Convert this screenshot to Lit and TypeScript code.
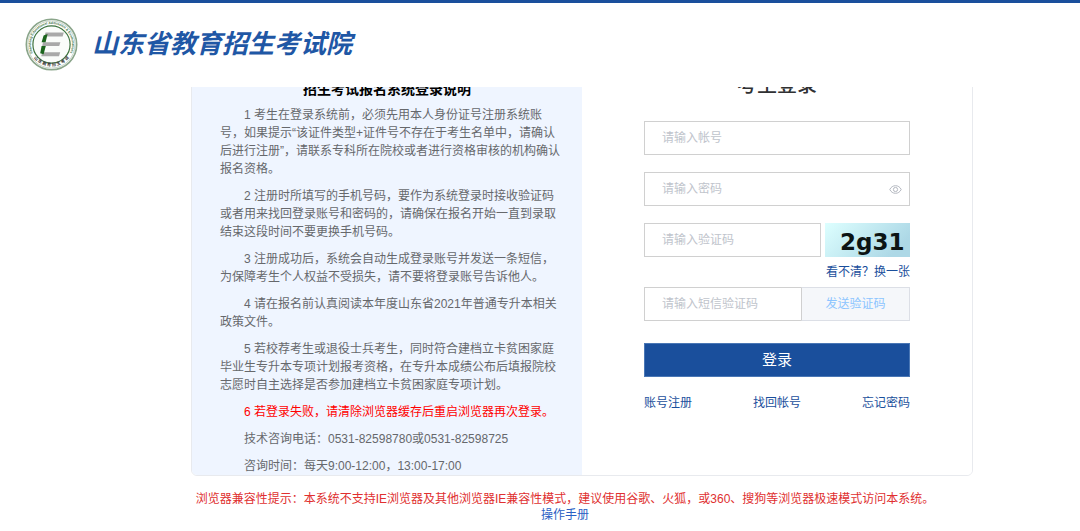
import { LitElement, html, css, svg } from "lit";
import { customElement, state } from "lit/decorators.js";

const NOTES: { text: string; warn?: boolean }[] = [
  { text: "1 考生在登录系统前，必须先用本人身份证号注册系统账号，如果提示“该证件类型+证件号不存在于考生名单中，请确认后进行注册”，请联系专科所在院校或者进行资格审核的机构确认报名资格。" },
  { text: "2 注册时所填写的手机号码，要作为系统登录时接收验证码或者用来找回登录账号和密码的，请确保在报名开始一直到录取结束这段时间不要更换手机号码。" },
  { text: "3 注册成功后，系统会自动生成登录账号并发送一条短信，为保障考生个人权益不受损失，请不要将登录账号告诉他人。" },
  { text: "4 请在报名前认真阅读本年度山东省2021年普通专升本相关政策文件。" },
  { text: "5 若校荐考生或退役士兵考生，同时符合建档立卡贫困家庭毕业生专升本专项计划报考资格，在专升本成绩公布后填报院校志愿时自主选择是否参加建档立卡贫困家庭专项计划。" },
  { text: "6 若登录失败，请清除浏览器缓存后重启浏览器再次登录。", warn: true },
  { text: "技术咨询电话：0531-82598780或0531-82598725" },
  { text: "咨询时间：每天9:00-12:00，13:00-17:00" },
];

@customElement("site-header")
class SiteHeader extends LitElement {
  static styles = css`
    :host {
      display: block;
      background: #fff;
    }
    .bar {
      display: flex;
      align-items: center;
      gap: 14px;
      box-sizing: border-box;
      height: 87px;
      padding: 0 25px 2px;
      border-top: 3px solid #1a4f9c;
    }
    .seal {
      width: 53px;
      height: 53px;
      flex: none;
      overflow: visible;
    }
    .name {
      margin: 0;
      font-size: 26px;
      line-height: 36px;
      font-weight: 700;
      font-style: italic;
      color: #1f57a5;
      white-space: nowrap;
    }
  `;
  render() {
    return html`<header class="bar">
      <svg class="seal" viewBox="0 0 53 53" aria-hidden="true">
        <defs>
          <path id="upper" d="M9.2 37.5 A20.5 20.5 0 1 1 43.8 37.5" />
          <path id="lower" d="M6.5 36.5 A23 23 0 0 0 46.5 36.5" />
        </defs>
        <circle cx="26.5" cy="26.5" r="25.2" fill="#fff" stroke="#8aa58a" stroke-width="1.6" />
        <circle cx="26.5" cy="26.5" r="23.6" fill="none" stroke="#9fb59f" stroke-width=".6" />
        <circle cx="26.5" cy="26.5" r="18.6" fill="#fafcfa" stroke="#3d733f" stroke-width="1.2" />
        <text font-family="Liberation Sans" font-size="3.4" font-weight="700" fill="#3d733f">
          <textPath href="#upper" startOffset="50%" text-anchor="middle">Shandong Educational Admission &amp; Examinations</textPath>
        </text>
        <text font-family="Noto Sans CJK SC" font-size="4.2" font-weight="700" fill="#333">
          <textPath href="#lower" startOffset="50%" text-anchor="middle">山 东 教 育 招 生 考 试</textPath>
        </text>
        <path d="M20.6 14.4h18.2l-1.2 4H19.4z M18 24.2h17.4l-1.2 3.8H17.2z M17.4 34.2h17.8l-1.2 4H16.2z" fill="#a9a9a9" />
        <path d="M18.6 17.4l4-1.4-2 8.2h-4z M16.6 28h4.2l-2.2 8.2-3.4-1z" fill="#1b651d" />
      </svg>
      <h1 class="name">山东省教育招生考试院</h1>
    </header>`;
  }
}

@customElement("login-notes")
class LoginNotes extends LitElement {
  static styles = css`
    :host {
      display: block;
      background: #eff5ff;
    }
    .title {
      margin: 0;
      padding: 22px 0 7px;
      font-size: 14px;
      line-height: 20px;
      font-weight: 700;
      text-align: center;
      color: #000;
    }
    .notes {
      padding: 0 19px 0 28px;
      color: #66686c;
    }
    .note {
      margin: 0 0 9px;
      font-size: 12px;
      line-height: 18px;
      text-indent: 24px;
    }
    .note:last-child {
      margin: 0;
    }
    .warn {
      color: #f00;
    }
  `;
  render() {
    return html`<section>
      <h2 class="title">招生考试报名系统登录说明</h2>
      <div class="notes">
        ${NOTES.map((n) => html`<p class="note ${n.warn ? "warn" : ""}">${n.text}</p>`)}
      </div>
    </section>`;
  }
}

@customElement("login-form")
class LoginForm extends LitElement {
  @state() private shown = false;

  static styles = css`
    :host {
      display: block;
      background: #fff;
    }
    .form {
      display: flex;
      flex-direction: column;
      padding: 14px 62px 0;
    }
    .title {
      margin: 0 0 22px;
      font-size: 20px;
      line-height: 28px;
      font-weight: 500;
      text-align: center;
      color: #303133;
    }
    .field {
      display: flex;
      align-items: center;
      box-sizing: border-box;
      height: 34px;
      min-width: 0;
      border: 1px solid #d0d0d0;
      background: #fff;
    }
    .gap {
      margin-bottom: 17px;
    }
    .input {
      flex: 1;
      min-width: 0;
      height: 100%;
      box-sizing: border-box;
      padding: 0 17px;
      border: 0;
      outline: 0;
      background: none;
      font: inherit;
      color: #606266;
    }
    .input::placeholder {
      color: #c0c4cc;
      opacity: 1;
    }
    .eye {
      display: flex;
      padding: 0 7px;
      border: 0;
      background: none;
    }
    .eye-icon {
      width: 13px;
      height: 13px;
    }
    .row {
      display: grid;
      grid-template-columns: 1fr 85px;
      gap: 4px;
    }
    .captcha {
      width: 85px;
      height: 34px;
    }
    .refresh {
      align-self: flex-end;
      padding: 6px 0;
    }
    .link {
      color: #1a4f9c;
      line-height: 18px;
      text-decoration: none;
    }
    .sms {
      display: grid;
      grid-template-columns: 1fr 109px;
    }
    .sms-field {
      border-right: 0;
    }
    .send {
      box-sizing: border-box;
      height: 34px;
      border: 1px solid #dcdfe6;
      border-left-color: #d0d0d0;
      background: #f5f7fa;
      color: #8cc5ff;
      font: inherit;
    }
    .login {
      height: 34px;
      margin: 22px 0 17px;
      border: 1px solid #4a77b5;
      background: #1a4f9c;
      color: #fff;
      font: inherit;
      font-size: 15px;
    }
    .links {
      display: flex;
      justify-content: space-between;
    }
  `;

  private toggle() {
    this.shown = !this.shown;
  }

  private eye() {
    return svg`<svg class="eye-icon" viewBox="0 0 13 13" fill="none" stroke="#b4b8c0" stroke-width="1">
      <path d="M.8 6.5C2 4 4 2.7 6.5 2.7S11 4 12.2 6.5C11 9 9 10.3 6.5 10.3S2 9 .8 6.5z" />
      <circle cx="6.5" cy="6.5" r="2.1" />
    </svg>`;
  }

  private captcha() {
    return svg`<svg class="captcha" viewBox="0 0 85 34" role="img" aria-label="2g31">
      <defs>
        <linearGradient id="sky" x1="0" y1="0" x2="1" y2="0.4">
          <stop offset="0" stop-color="#dff" />
          <stop offset="1" stop-color="#add8e6" />
        </linearGradient>
      </defs>
      <rect width="85" height="34" fill="url(#sky)" />
      <text x="15" y="27" font-family="DejaVu Sans" font-size="23" font-weight="700" fill="#0c1414">2g31</text>
    </svg>`;
  }

  render() {
    return html`<form class="form" @submit=${(e: Event) => e.preventDefault()}>
      <h2 class="title">考生登录</h2>
      <div class="field gap">
        <input class="input" type="text" aria-label="请输入帐号" placeholder="请输入帐号" />
      </div>
      <div class="field gap">
        <input class="input" type=${this.shown ? "text" : "password"} aria-label="请输入密码" placeholder="请输入密码" />
        <button class="eye" type="button" aria-label="密码" @click=${this.toggle}>${this.eye()}</button>
      </div>
      <div class="row">
        <div class="field">
          <input class="input" type="text" aria-label="请输入验证码" placeholder="请输入验证码" />
        </div>
        ${this.captcha()}
      </div>
      <a class="link refresh" href="#">看不清？换一张</a>
      <div class="sms">
        <div class="field sms-field">
          <input class="input" type="text" aria-label="请输入短信验证码" placeholder="请输入短信验证码" />
        </div>
        <button class="send" type="button">发送验证码</button>
      </div>
      <button class="login" type="submit">登录</button>
      <nav class="links">
        <a class="link" href="#">账号注册</a>
        <a class="link" href="#">找回帐号</a>
        <a class="link" href="#">忘记密码</a>
      </nav>
    </form>`;
  }
}

@customElement("app-root")
class AppRoot extends LitElement {
  static styles = css`
    :host {
      display: block;
      background: #fff;
      font-family: "Liberation Sans", "Noto Sans CJK SC", sans-serif;
      font-size: 12px;
      line-height: 18px;
    }
    .page {
      overflow: hidden;
      padding: 0 24px 12px 191px;
    }
    .card {
      display: grid;
      grid-template-columns: 1fr 1fr;
      box-sizing: border-box;
      max-width: 782px;
      margin-top: -31px;
      border: 1px solid #e8eaee;
      border-radius: 6px;
      overflow: hidden;
    }
    .foot {
      max-width: 748px;
      padding-top: 15px;
      line-height: 16px;
      text-align: center;
    }
    .tip {
      margin: 0;
      color: #e03030;
    }
    .manual {
      color: #2a5fc4;
      text-decoration: none;
    }
  `;
  render() {
    return html`<site-header></site-header>
      <main class="page">
        <div class="card">
          <login-notes></login-notes>
          <login-form></login-form>
        </div>
        <footer class="foot">
          <p class="tip">浏览器兼容性提示：本系统不支持IE浏览器及其他浏览器IE兼容性模式，建议使用谷歌、火狐，或360、搜狗等浏览器极速模式访问本系统。</p>
          <a class="manual" href="#">操作手册</a>
        </footer>
      </main>`;
  }
}
